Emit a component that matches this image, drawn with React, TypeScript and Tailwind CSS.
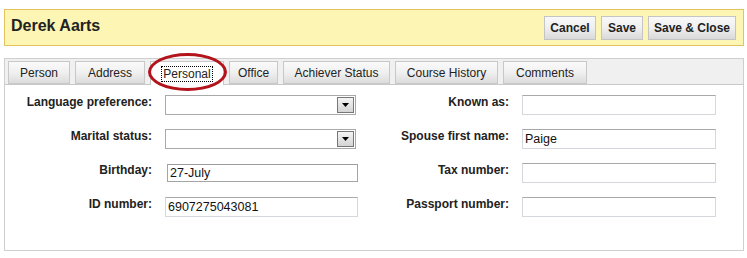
import React from "react";

const font = { fontFamily: '"Liberation Sans", Arial, sans-serif' };

const tabs = [
  { label: "Person", w: "w-[62px]" },
  { label: "Address", w: "w-[70px]" },
  { label: "Personal", w: "w-[74px]" },
  { label: "Office", w: "w-[49px]" },
  { label: "Achiever Status", w: "w-[107px]" },
  { label: "Course History", w: "w-[103px]" },
  { label: "Comments", w: "w-[84px]" },
];

function Btn({ children, w }: { children: React.ReactNode; w: string }) {
  return (
    <button
      className={`${w} h-[24px] border border-[#c4c4c4] bg-gradient-to-b from-[#f9f9f9] via-[#efefef] to-[#d9d9d9] text-[12px] font-bold text-[#222]`}
    >
      {children}
    </button>
  );
}

function Select() {
  return (
    <div className="flex h-[20px] w-[191px] items-center justify-end border border-[#a9a9a9] bg-white pr-[1px]">
      <div className="flex h-[16px] w-[17px] items-center justify-center border border-[#777] bg-gradient-to-b from-[#f4f4f4] to-[#d4d4d4]">
        <svg width="7" height="4" viewBox="0 0 7 4" aria-hidden>
          <polygon points="0,0 7,0 3.5,4" fill="#000" />
        </svg>
      </div>
    </div>
  );
}

function Input({ value, w = "w-[194px]", inset }: { value?: string; w?: string; inset?: boolean }) {
  return (
    <div
      className={`flex ${w} items-center border bg-white pl-[2px] text-[12.5px] text-[#111] ${
        inset ? "h-[18px] border-[#a4a4a4] border-t-[#9c9c9c]" : "h-[20px] border-[#d4d8dc] border-t-[#a8a8a8]"
      }`}
    >
      {value}
    </div>
  );
}

function Label({ children, w }: { children: React.ReactNode; w: string }) {
  return <div className={`${w} text-right text-[12px] font-bold leading-[14px] text-[#222]`}>{children}</div>;
}

export default function App() {
  return (
    <div className="h-[258px] w-[747px] bg-white px-[4px] pt-[9px]" style={font}>
      <div className="flex h-[37px] w-[740px] items-center justify-between border border-[#e3c45c] bg-[#fdf5b3] pl-[6px] pr-[7px]">
        <h1 className="mb-[4px] text-[16px] font-bold text-[#222]">Derek Aarts</h1>
        <div className="flex gap-[5px]">
          <Btn w="w-[52px]">Cancel</Btn>
          <Btn w="w-[42px]">Save</Btn>
          <Btn w="w-[88px]">Save &amp; Close</Btn>
        </div>
      </div>

      <div className="relative mt-[12px] w-[740px] border border-[#cfcfcf] bg-white">
        <div className="flex gap-[5px] bg-[#f0f0f0] pl-[3px] pt-[2px]">
          {tabs.map((t) =>
            t.label === "Personal" ? (
              <div
                key={t.label}
                className={`${t.w} -mb-[1px] flex h-[24px] items-center justify-center border border-b-0 border-[#c8c8c8] bg-white text-[12px] text-[#222]`}
              >
                <span className="border border-dotted border-black px-[1px] leading-[14px]">{t.label}</span>
              </div>
            ) : (
              <div
                key={t.label}
                className={`${t.w} flex h-[23px] items-center justify-center border border-[#c8c8c8] bg-gradient-to-b from-[#fafafa] via-[#f0f0f0] to-[#dcdcdc] text-[12px] text-[#222]`}
              >
                {t.label}
              </div>
            )
          )}
        </div>
        <div className="absolute left-[143px] top-[-6px] h-[38px] w-[79px] rounded-[50%] border-[3px] border-[#b3141c]" />

        <div className="flex h-[166px] flex-col gap-[14px] border-t border-[#c8c8c8] pt-[10px]">
          <div className="flex items-start">
            <Label w="w-[147px]">Language preference:</Label>
            <div className="ml-[13px]">
              <Select />
            </div>
            <Label w="w-[153px]">Known as:</Label>
            <div className="ml-[13px]">
              <Input />
            </div>
          </div>
          <div className="flex items-start">
            <Label w="w-[147px]">Marital status:</Label>
            <div className="ml-[13px]">
              <Select />
            </div>
            <Label w="w-[153px]">Spouse first name:</Label>
            <div className="ml-[13px]">
              <Input value="Paige" />
            </div>
          </div>
          <div className="flex items-start">
            <Label w="w-[147px]">Birthday:</Label>
            <div className="ml-[15px] mt-[1px]">
              <Input value="27-July" w="w-[191px]" inset />
            </div>
            <Label w="w-[151px]">Tax number:</Label>
            <div className="ml-[13px]">
              <Input />
            </div>
          </div>
          <div className="flex items-start">
            <Label w="w-[147px]">ID number:</Label>
            <div className="ml-[13px]">
              <Input value="6907275043081" w="w-[193px]" />
            </div>
            <Label w="w-[151px]">Passport number:</Label>
            <div className="ml-[13px]">
              <Input />
            </div>
          </div>
        </div>
      </div>
    </div>
  );
}
